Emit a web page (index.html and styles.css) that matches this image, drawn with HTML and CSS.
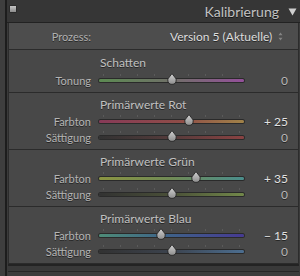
FILE: index.html
```html
<!DOCTYPE html>
<html lang="de">
<head>
  <meta charset="UTF-8" />
  <meta name="viewport" content="width=device-width, initial-scale=1.0" />
  <title>Kalibrierung</title>
  <link rel="stylesheet" href="styles.css">
</head>
<body>
  <svg width="0" height="0" style="position:absolute">
    <defs>
      <linearGradient id="thumbFill" x1="0" y1="0" x2="0" y2="1">
        <stop offset="0" stop-color="#d2d2d2" />
        <stop offset="1" stop-color="#8c8c8c" />
      </linearGradient>
      <symbol id="thumb" viewBox="0 0 10 12">
        <path d="M5 0.6 L9.2 6 Q9.5 11.4 5 11.4 Q0.5 11.4 0.8 6 Z" fill="url(#thumbFill)" stroke="#262626" stroke-width="0.9" />
      </symbol>
    </defs>
  </svg>

  <div class="app">
    <div class="gutter"></div>
    <div class="panel">
      <div class="panel-header">
        <span class="header-icon"></span>
        <span class="panel-title">Kalibrierung</span>
        <svg class="collapse" width="9" height="8" viewBox="0 0 9 8">
          <path d="M0.5 0.5 H8.5 L4.5 7.5 Z" fill="#cfcfcf" />
        </svg>
      </div>

      <div class="panel-body">
        <div class="process-row">
          <span class="process-label">Prozess:</span>
          <span class="process-value">Version 5 (Aktuelle)</span>
          <svg class="stepper" width="5" height="9" viewBox="0 0 5 9">
            <path d="M2.5 0.5 L4.5 3.3 H0.5 Z M2.5 8.5 L4.5 5.7 H0.5 Z" fill="#848484" />
          </svg>
        </div>

        <div class="section section-first">
          <div class="section-title">Schatten</div>
          <div class="slider-row">
            <span class="label">Tonung</span>
            <div class="track tint-shadow">
              <svg class="thumb" style="left: 68px"><use href="#thumb" /></svg>
            </div>
            <span class="value zero">0</span>
          </div>
        </div>

        <div class="section">
          <div class="section-title">Primärwerte Rot</div>
          <div class="slider-row">
            <span class="label">Farbton</span>
            <div class="track hue-red">
              <svg class="thumb" style="left: 85px"><use href="#thumb" /></svg>
            </div>
            <span class="value">+ 25</span>
          </div>
          <div class="slider-row">
            <span class="label">Sättigung</span>
            <div class="track sat-red">
              <svg class="thumb" style="left: 68px"><use href="#thumb" /></svg>
            </div>
            <span class="value zero">0</span>
          </div>
        </div>

        <div class="section">
          <div class="section-title">Primärwerte Grün</div>
          <div class="slider-row">
            <span class="label">Farbton</span>
            <div class="track hue-green">
              <svg class="thumb" style="left: 92px"><use href="#thumb" /></svg>
            </div>
            <span class="value">+ 35</span>
          </div>
          <div class="slider-row">
            <span class="label">Sättigung</span>
            <div class="track sat-green">
              <svg class="thumb" style="left: 68px"><use href="#thumb" /></svg>
            </div>
            <span class="value zero">0</span>
          </div>
        </div>

        <div class="section">
          <div class="section-title">Primärwerte Blau</div>
          <div class="slider-row">
            <span class="label">Farbton</span>
            <div class="track hue-blue">
              <svg class="thumb" style="left: 57px"><use href="#thumb" /></svg>
            </div>
            <span class="value">&minus; 15</span>
          </div>
          <div class="slider-row">
            <span class="label">Sättigung</span>
            <div class="track sat-blue">
              <svg class="thumb" style="left: 68px"><use href="#thumb" /></svg>
            </div>
            <span class="value zero">0</span>
          </div>
        </div>
      </div>

      <div class="panel-foot"></div>
    </div>
  </div>
</body>
</html>
```

FILE: styles.css
```css
body {
  margin: 0;
  padding: 0;
  background-color: #3a3a3a;
  font-family: Lato, "Open Sans", sans-serif;
  color: #c0c0c0;
  overflow: hidden;
}
.app {
  display: flex;
  width: 300px;
  height: 276px;
}
.gutter {
  width: 5px;
  background: #3e3e3e;
  border-right: 2px solid #1d1d1d;
}
.panel {
  flex: 1;
  display: flex;
  flex-direction: column;
}
.panel-header {
  height: 22px;
  display: flex;
  align-items: center;
  padding: 0 3px 0 2px;
  background: #363636;
  border-bottom: 1px solid #222;
}
.header-icon {
  width: 6px;
  height: 6px;
  margin-top: -5px;
  border: 1px solid #2a2a2a;
  border-radius: 1px;
  background: linear-gradient(#c4c4c4, #8c8c8c);
}
.panel-title {
  margin-left: auto;
  margin-right: 9px;
  font-size: 14px;
  color: #c2c2c2;
  text-shadow: 0 1px 0 rgba(0, 0, 0, 0.6);
}
.collapse {
  margin-top: 1px;
}
.panel-body {
  margin: 0 1px;
  border-left: 1px solid #2c2c2c;
  border-right: 1px solid #2c2c2c;
  background: #484848;
}
.process-row {
  height: 26px;
  display: flex;
  align-items: center;
  background: #4d4d4d;
  border-bottom: 1px solid #2b2b2b;
  text-shadow: 0 1px 0 rgba(0, 0, 0, 0.5);
}
.process-label {
  width: 82px;
  text-align: right;
  font-size: 11px;
  color: #b0b0b0;
}
.process-value {
  margin-left: 79px;
  font-size: 12px;
  color: #dedede;
}
.stepper {
  margin-left: 6px;
}
.section {
  padding: 4px 0;
  border-bottom: 1px solid #2b2b2b;
}
.section-first {
  padding-top: 5px;
}
.section-title {
  height: 16px;
  line-height: 16px;
  padding-left: 91px;
  font-size: 12px;
  color: #c0c0c0;
  text-shadow: 0 1px 0 rgba(0, 0, 0, 0.5);
}
.section-first .section-title {
  height: 17px;
}
.slider-row {
  height: 16px;
  display: flex;
  align-items: center;
  font-size: 11px;
  text-shadow: 0 1px 0 rgba(0, 0, 0, 0.5);
}
.label {
  width: 82px;
  margin-right: 8px;
  text-align: right;
  color: #b4b4b4;
}
.track {
  position: relative;
  width: 145px;
  height: 3px;
  border-radius: 2px;
  box-shadow: 0 0 0 1px rgba(24, 24, 24, 0.6);
}
.track::before {
  content: "";
  position: absolute;
  left: 4px;
  top: -5px;
  width: 137px;
  height: 2px;
  background: repeating-linear-gradient(to right, #5a5a5a 0 1px, transparent 1px 17px);
}
.thumb {
  position: absolute;
  top: -6px;
  width: 10px;
  height: 12px;
}
.value {
  width: 44px;
  text-align: right;
  font-size: 12px;
  color: #e2e2e2;
}
.value.zero {
  color: #b8b8b8;
}
.tint-shadow {
  background: linear-gradient(to right, #5c8a52, #707068 50%, #94509a);
}
.hue-red {
  background: linear-gradient(to right, #873a58, #8f4c48 55%, #a08248);
}
.sat-red {
  background: linear-gradient(to right, #323232, #553b3b 50%, #8a4242);
}
.hue-green {
  background: linear-gradient(to right, #8a9442, #708a56 50%, #4a8e8c);
}
.sat-green {
  background: linear-gradient(to right, #323232, #4a5038 50%, #72884a);
}
.hue-blue {
  background: linear-gradient(to right, #4e8c78, #3e6488 45%, #463a92);
}
.sat-blue {
  background: linear-gradient(to right, #323232, #3c434e 50%, #4c6e90);
}
.panel-foot {
  flex: 1;
  margin: 0 1px;
  background: #393939;
  border-top: 2px solid #232323;
  box-shadow: inset 0 -4px 0 #3c3c3c, inset 0 -5px 0 #262626;
}
```
